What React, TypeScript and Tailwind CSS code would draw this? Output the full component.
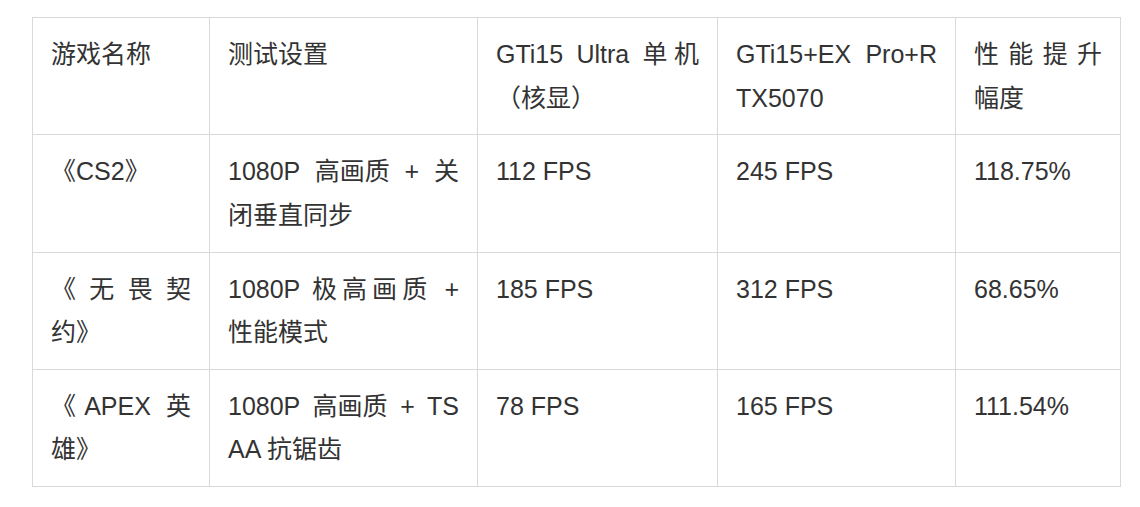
import React from "react";

type Cell = React.ReactNode[];

const K = ({ children }: { children: React.ReactNode }) => (
  <span className="inline-block">{children}</span>
);

const rows: Cell[][] = [
  [["游戏名称"], ["测试设置"], ["GTi15 Ultra 单机", "（核显）"], ["GTi15+EX Pro+R", "TX5070"], ["性能提升", "幅度"]],
  [
    ["《CS2》"],
    [<>1080P <K>高画质</K> + 关</>, "闭垂直同步"],
    ["112 FPS"],
    ["245 FPS"],
    ["118.75%"],
  ],
  [["《无畏契", "约》"], ["1080P 极高画质 +", "性能模式"], ["185 FPS"], ["312 FPS"], ["68.65%"]],
  [
    ["《APEX 英", "雄》"],
    [<>1080P <K>高画质</K> + TS</>, "AA 抗锯齿"],
    ["78 FPS"],
    ["165 FPS"],
    ["111.54%"],
  ],
];

function CellView({ lines }: { lines: Cell }) {
  return (
    <div className="border-r border-b border-[#d9d9d9] px-[18px] pt-[15px] pb-[14.25px]">
      {lines.map((l, i) =>
        i < lines.length - 1 ? (
          <div key={i} className="text-justify [text-align-last:justify] whitespace-nowrap">
            {l}
          </div>
        ) : (
          <div key={i} className="whitespace-nowrap">
            {l}
          </div>
        )
      )}
    </div>
  );
}

export default function App() {
  return (
    <div className="min-h-[507px] w-[1140px] bg-white pt-[17px] pl-[32px]">
      <div
        className="grid w-[1089px] grid-cols-[177px_268px_240px_238px_165px] border-l border-t border-[#d9d9d9] text-[25px] leading-[43.5px] text-[#333333]"
        style={{ fontFamily: '"Liberation Sans", Arial, "Noto Sans CJK SC", sans-serif' }}
      >
        {rows.map((r, ri) =>
          r.map((c, ci) => <CellView key={`${ri}-${ci}`} lines={c} />)
        )}
      </div>
    </div>
  );
}
